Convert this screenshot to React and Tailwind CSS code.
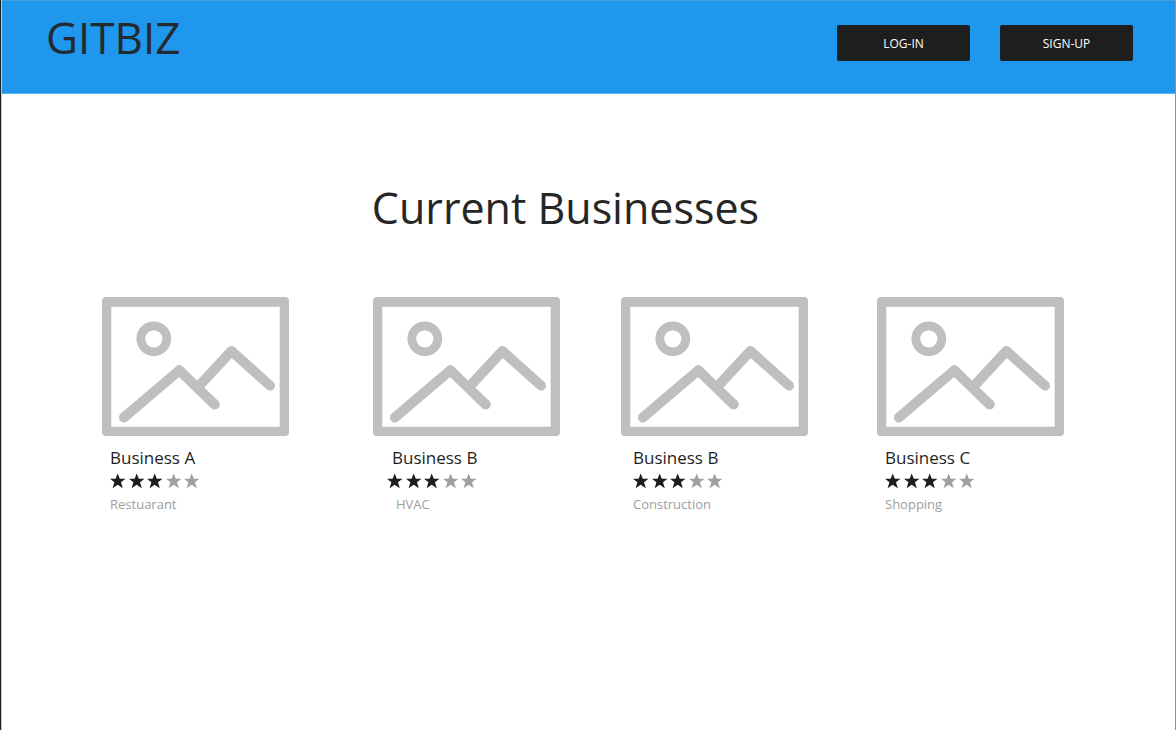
const businesses = [
  { id: 1, name: "Business A", category: "Restuarant", rating: 3, nameInset: "pl-2", starInset: "pl-2", categoryInset: "pl-2" },
  { id: 2, name: "Business B", category: "HVAC", rating: 3, nameInset: "pl-[19px]", starInset: "pl-3.5", categoryInset: "pl-[23px]" },
  { id: 3, name: "Business B", category: "Construction", rating: 3, nameInset: "pl-3", starInset: "pl-3", categoryInset: "pl-3" },
  { id: 4, name: "Business C", category: "Shopping", rating: 3, nameInset: "pl-2", starInset: "pl-2", categoryInset: "pl-2" },
];

function PlaceholderImage() {
  return (
    <svg
      viewBox="0 0 187 139"
      className="block h-auto w-full max-w-[187px]"
      fill="none"
      stroke="#bfbfbf"
      strokeLinecap="round"
      strokeLinejoin="round"
      aria-hidden="true"
    >
      <path
        d="M4 0H183a4 4 0 0 1 4 4V135a4 4 0 0 1-4 4H4a4 4 0 0 1-4-4V4a4 4 0 0 1 4-4ZM9.3 9.7V129.7H177.7V9.7Z"
        fill="#bfbfbf"
        fillRule="evenodd"
        stroke="none"
      />
      <circle cx="51.8" cy="41.8" r="13" strokeWidth="8.8" />
      <path d="M22 120.4 77.4 73.3 112.8 107.6" strokeWidth="10" />
      <path d="M97.5 88.5 129.4 54 168 88.6" strokeWidth="10" />
    </svg>
  );
}

function Rating({ value }) {
  return (
    <div className="flex w-[90px] justify-between" role="img" aria-label={`${value} out of 5`}>
      {[1, 2, 3, 4, 5].map((n) => (
        <svg
          key={n}
          viewBox="0 0 16 16"
          className={n <= value ? "size-4 fill-[#1e1e1e]" : "size-4 fill-[#a0a0a0]"}
          aria-hidden="true"
        >
          <path d="M7.7 .5 9.8 5.8H15.5L11 9.3 12.8 15.2 7.7 11.8 2.6 15.2 4.4 9.3 0 5.8H5.6Z" />
        </svg>
      ))}
    </div>
  );
}

function BusinessCard({ business }) {
  return (
    <li>
      <PlaceholderImage />
      <h2 className={`mt-2.5 text-[17px] leading-6 text-[#1e1e1e] ${business.nameInset}`}>{business.name}</h2>
      <div className={`mt-[3px] ${business.starInset}`}>
        <Rating value={business.rating} />
      </div>
      <p className={`mt-[3px] text-[13px] leading-6 text-[#9d9d9d] ${business.categoryInset}`}>{business.category}</p>
    </li>
  );
}

export default function App() {
  return (
    <div className="min-h-screen border-l border-[#222222] bg-white font-['Open_Sans',sans-serif]">
      <div className="min-h-screen border-x border-l-[#c4c4c4] border-r-[#909090]">
        <header className="flex items-start justify-between border-y border-t-[#4a9fd6] border-b-[#5fb3ee] bg-[#1f97ec] pr-[42px] pb-[26px] pl-11">
          <a href="#" className="mt-1.5 text-[44px] leading-[60px] text-[#232a30]">GITBIZ</a>
          <nav className="mt-6 flex gap-[30px]">
            <button type="button" className="h-9 w-[133px] rounded-xs bg-[#1e1e1e] pt-px text-xs text-white">LOG-IN</button>
            <button type="button" className="h-9 w-[133px] rounded-xs bg-[#1e1e1e] pt-px text-xs text-white">SIGN-UP</button>
          </nav>
        </header>
        <main className="pt-[84px] pr-[111px] pb-16 pl-[100px]">
          <h1 className="pr-[35px] text-center text-[43px] leading-[60px] text-[#262626]">Current Businesses</h1>
          <ul className="mt-[59px] grid grid-cols-[271fr_248fr_256fr_187fr]">
            {businesses.map((business) => (
              <BusinessCard key={business.id} business={business} />
            ))}
          </ul>
        </main>
      </div>
    </div>
  );
}
